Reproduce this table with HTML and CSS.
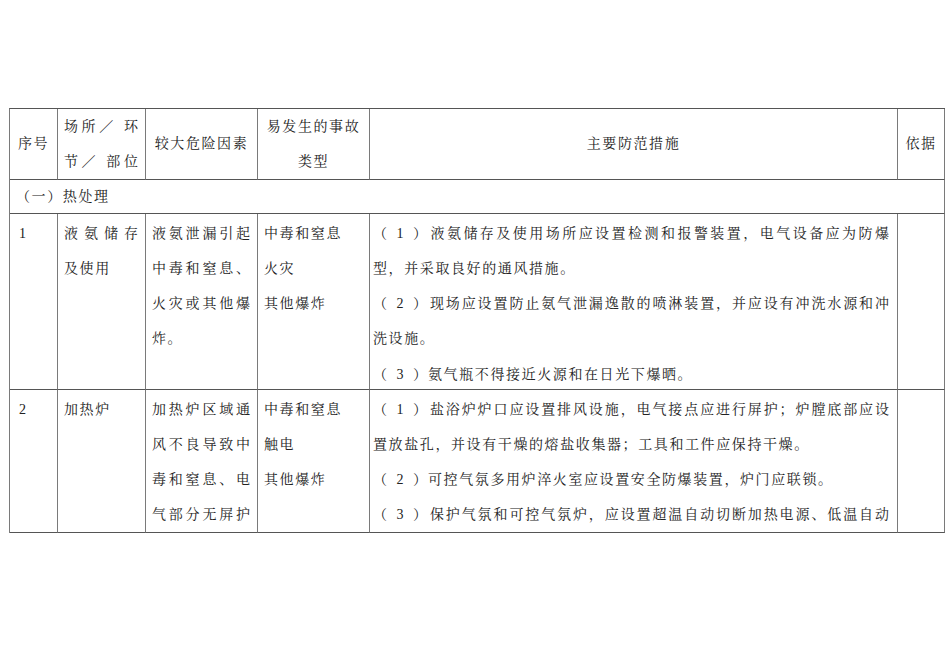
FILE: index.html
```html
<!DOCTYPE html>
<html lang="zh-CN">
<head>
<meta charset="utf-8">
<title>热处理 危险因素</title>
<link rel="stylesheet" href="styles.css">
</head>
<body>
<div class="grid">
  <div class="cell center">序号</div>
  <div class="cell vcenter"><div class="j">场所／ 环</div><div class="j">节／ 部位</div></div>
  <div class="cell center">较大危险因素</div>
  <div class="cell center"><div>易发生的事故</div><div>类型</div></div>
  <div class="cell center">主要防范措施</div>
  <div class="cell center">依据</div>

  <div class="cell section">（一）热处理</div>

  <div class="cell c1">1</div>
  <div class="cell"><div class="j">液氨储存</div><div>及使用</div></div>
  <div class="cell"><div class="j">液氨泄漏引起</div><div class="j">中毒和窒息、</div><div class="j">火灾或其他爆</div><div>炸。</div></div>
  <div class="cell"><div>中毒和窒息</div><div>火灾</div><div>其他爆炸</div></div>
  <div class="cell c5">
    <div class="j"><span class="p">（<span class="n">1</span>）</span>液氨储存及使用场所应设置检测和报警装置，电气设备应为防爆</div>
    <div>型，并采取良好的通风措施。</div>
    <div class="j"><span class="p">（<span class="n">2</span>）</span>现场应设置防止氨气泄漏逸散的喷淋装置，并应设有冲洗水源和冲</div>
    <div>洗设施。</div>
    <div><span class="p">（<span class="n">3</span>）</span>氨气瓶不得接近火源和在日光下爆晒。</div>
  </div>
  <div class="cell"></div>

  <div class="cell c1">2</div>
  <div class="cell"><div>加热炉</div></div>
  <div class="cell"><div class="j">加热炉区域通</div><div class="j">风不良导致中</div><div class="j">毒和窒息、电</div><div class="j">气部分无屏护</div></div>
  <div class="cell"><div>中毒和窒息</div><div>触电</div><div>其他爆炸</div></div>
  <div class="cell c5">
    <div class="j"><span class="p">（<span class="n">1</span>）</span>盐浴炉炉口应设置排风设施，电气接点应进行屏护；炉膛底部应设</div>
    <div>置放盐孔，并设有干燥的熔盐收集器；工具和工件应保持干燥。</div>
    <div><span class="p">（<span class="n">2</span>）</span>可控气氛多用炉淬火室应设置安全防爆装置，炉门应联锁。</div>
    <div class="j"><span class="p">（<span class="n">3</span>）</span>保护气氛和可控气氛炉，应设置超温自动切断加热电源、低温自动</div>
  </div>
  <div class="cell"></div>
</div>
</body>
</html>
```

FILE: styles.css
```css
html, body {
  margin: 0;
  padding: 0;
  background: #ffffff;
}

body {
  font-family: "Liberation Serif", "Noto Serif CJK SC", "Noto Sans CJK SC", serif;
  font-size: 14px;
  color: #222222;
}

.grid {
  display: grid;
  grid-template-columns: 48px 88px 112px 112px 528px 47px;
  grid-template-rows: 71px 34px 176px 143px;
  width: 936px;
  margin: 108px 0 0 9px;
  border-top: 1px solid #555555;
  border-left: 1px solid #7a7a7a;
  box-sizing: border-box;
}

.cell {
  box-sizing: border-box;
  border-right: 1px solid #7a7a7a;
  border-bottom: 1px solid #555555;
  padding: 1.5px 7px 0 6px;
  line-height: 35.3px;
  letter-spacing: 1.6px;
  white-space: nowrap;
  overflow: hidden;
  text-spacing-trim: space-all;
}

.center {
  display: flex;
  flex-direction: column;
  align-items: center;
  justify-content: center;
  padding: 0;
}

.vcenter {
  display: flex;
  flex-direction: column;
  justify-content: center;
  padding-top: 0;
}

.section {
  grid-column: 1 / -1;
  display: flex;
  align-items: center;
  padding-top: 0;
}

.c1 {
  padding-left: 9px;
}

.c5 {
  padding-left: 3px;
  padding-right: 8px;
}

.j {
  text-align: justify;
  text-align-last: justify;
  letter-spacing: 0;
}

.p {
  display: inline-block;
  width: 55px;
  letter-spacing: 0;
  white-space: nowrap;
  text-align: left;
  text-align-last: left;
}

.n {
  display: inline-block;
  width: 26px;
  text-align: center;
  text-align-last: center;
}
```
